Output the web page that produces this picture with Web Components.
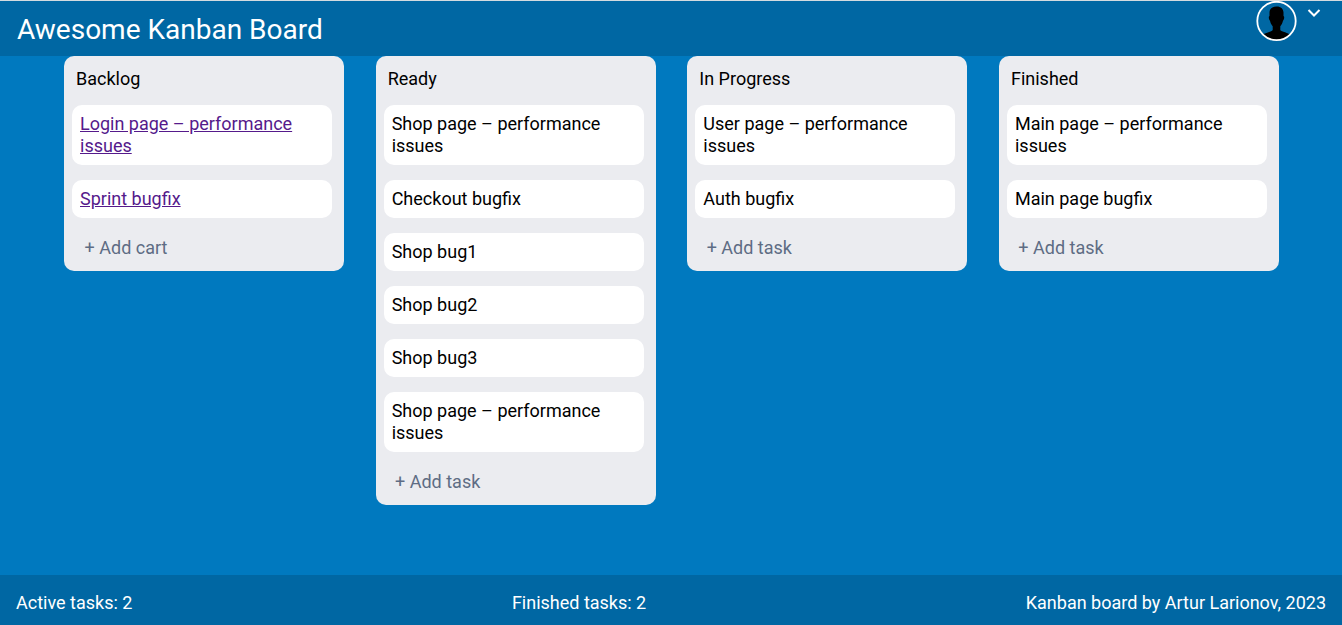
<!DOCTYPE html>
<html lang="en">
<head>
<meta charset="utf-8">
<meta name="viewport" content="width=device-width, initial-scale=1">
<title>Awesome Kanban Board</title>
<style>
  body {
    margin: 0;
    font: 18px/22px Roboto, sans-serif;
    color: #000;
    background: #0079bf;
  }
</style>
</head>
<body>
<kanban-app></kanban-app>

<template id="app">
  <style>
    :host {
      display: flex;
      flex-direction: column;
      min-height: 100vh;
      box-sizing: border-box;
      border-top: 1px solid #d3dbe0;
    }
    main {
      flex: 1;
      display: flex;
      justify-content: space-between;
      align-items: flex-start;
      padding: 0 63px 0 64px;
    }
  </style>
  <kanban-header>Awesome Kanban Board</kanban-header>
  <main>
    <kanban-column heading="Backlog" action="+ Add cart">
      <kanban-card href="#login-performance">Login page – performance issues</kanban-card>
      <kanban-card href="#sprint-bugfix">Sprint bugfix</kanban-card>
    </kanban-column>
    <kanban-column heading="Ready" action="+ Add task">
      <kanban-card>Shop page – performance issues</kanban-card>
      <kanban-card>Checkout bugfix</kanban-card>
      <kanban-card>Shop bug1</kanban-card>
      <kanban-card>Shop bug2</kanban-card>
      <kanban-card>Shop bug3</kanban-card>
      <kanban-card>Shop page – performance issues</kanban-card>
    </kanban-column>
    <kanban-column heading="In Progress" action="+ Add task">
      <kanban-card>User page – performance issues</kanban-card>
      <kanban-card>Auth bugfix</kanban-card>
    </kanban-column>
    <kanban-column heading="Finished" action="+ Add task">
      <kanban-card>Main page – performance issues</kanban-card>
      <kanban-card>Main page bugfix</kanban-card>
    </kanban-column>
  </main>
  <kanban-footer>
    <span>Active tasks: 2</span>
    <span>Finished tasks: 2</span>
    <span>Kanban board by Artur Larionov, 2023</span>
  </kanban-footer>
</template>

<template id="header">
  <style>
    :host { display: block; background: #0067a3; color: #fff; }
    header {
      display: flex;
      justify-content: space-between;
      align-items: flex-start;
      padding: 0 17px;
    }
    h1 { margin: 0; padding: 13px 0 10px; font-size: 28px; line-height: 32px; font-weight: 400; }
  </style>
  <header>
    <h1><slot></slot></h1>
    <user-menu></user-menu>
  </header>
</template>

<template id="user">
  <style>
    :host { display: block; }
    button {
      display: flex;
      align-items: flex-start;
      gap: 8px;
      margin: 0;
      padding: 0;
      border: 0;
      background: none;
      color: inherit;
      cursor: pointer;
    }
    svg { display: block; }
    .chevron { margin: 4px 0; }
  </style>
  <button type="button" aria-label="User menu" aria-haspopup="true">
    <svg width="41" height="41" viewBox="0 0 41 41" aria-hidden="true">
      <clipPath id="disc"><circle cx="20.5" cy="20.5" r="19"/></clipPath>
      <path clip-path="url(#disc)" d="M20.500 5.500C24.500 5.300 27.300 7.500 27.500 11.500L27.500 15C28.700 15.500 28.300 18.600 27 19.700C26.400 22.300 25.400 24 24.300 25.200V29C25.500 31.200 32.500 31.300 34.500 34.500V41H6.500V34.500C8.500 31.300 15.500 31.200 16.700 29V25.200C15.600 24 14.600 22.300 14 19.700C12.700 18.600 12.300 15.500 13.500 15L13.500 11C13.800 7.500 16.500 5.700 20.500 5.500Z"/>
      <circle cx="20.500" cy="20" r="19.200" fill="none" stroke="#fff" stroke-width="1.800"/>
    </svg>
    <svg class="chevron" width="20" height="16" viewBox="0 0 20 16" aria-hidden="true">
      <path d="M3.500 5L9 10.500L14.500 5" fill="none" stroke="#fff" stroke-width="2"/>
    </svg>
  </button>
</template>

<template id="column">
  <style>
    :host { display: block; }
    section {
      box-sizing: border-box;
      width: 280px;
      padding: 12px 12px 12px 8px;
      border-radius: 10px;
      background: #ebecf0;
    }
    h2 { margin: 0 0 15px; padding: 0 4px; font-size: 18px; line-height: 22px; font-weight: 400; }
    .cards { display: flex; flex-direction: column; gap: 15px; }
    button {
      display: block;
      width: 100px;
      margin: 15px 0 0 4px;
      padding: 4px 0 0;
      border: 0;
      background: none;
      font: inherit;
      color: #5e6c84;
      white-space: nowrap;
      cursor: pointer;
    }
  </style>
  <section>
    <h2></h2>
    <div class="cards"><slot></slot></div>
    <button type="button"></button>
  </section>
</template>

<template id="card">
  <style>
    :host { display: block; padding: 8px; border-radius: 10px; background: #fff; }
    a { color: #551a8b; }
  </style>
  <slot></slot>
</template>

<template id="footer">
  <style>
    :host { display: block; background: #0067a3; color: #fff; }
    footer { display: flex; justify-content: space-between; padding: 17px 16px 11px; }
  </style>
  <footer><slot></slot></footer>
</template>

<script>
  class KanbanElement extends HTMLElement {
    constructor(templateId) {
      super();
      this.attachShadow({ mode: "open" })
        .append(document.getElementById(templateId).content.cloneNode(true));
    }
  }

  customElements.define("kanban-card", class extends KanbanElement {
    constructor() { super("card"); }
    connectedCallback() {
      const slot = this.shadowRoot.querySelector("slot");
      if (this.hasAttribute("href") && slot.parentNode === this.shadowRoot) {
        const link = document.createElement("a");
        link.href = this.getAttribute("href");
        slot.replaceWith(link);
        link.append(slot);
      }
    }
  });

  customElements.define("kanban-column", class extends KanbanElement {
    constructor() { super("column"); }
    connectedCallback() {
      this.shadowRoot.querySelector("h2").textContent = this.getAttribute("heading");
      this.shadowRoot.querySelector("button").textContent = this.getAttribute("action");
    }
  });

  customElements.define("user-menu", class extends KanbanElement {
    constructor() { super("user"); }
  });

  customElements.define("kanban-header", class extends KanbanElement {
    constructor() { super("header"); }
  });

  customElements.define("kanban-footer", class extends KanbanElement {
    constructor() { super("footer"); }
  });

  customElements.define("kanban-app", class extends KanbanElement {
    constructor() { super("app"); }
  });
</script>
</body>
</html>
